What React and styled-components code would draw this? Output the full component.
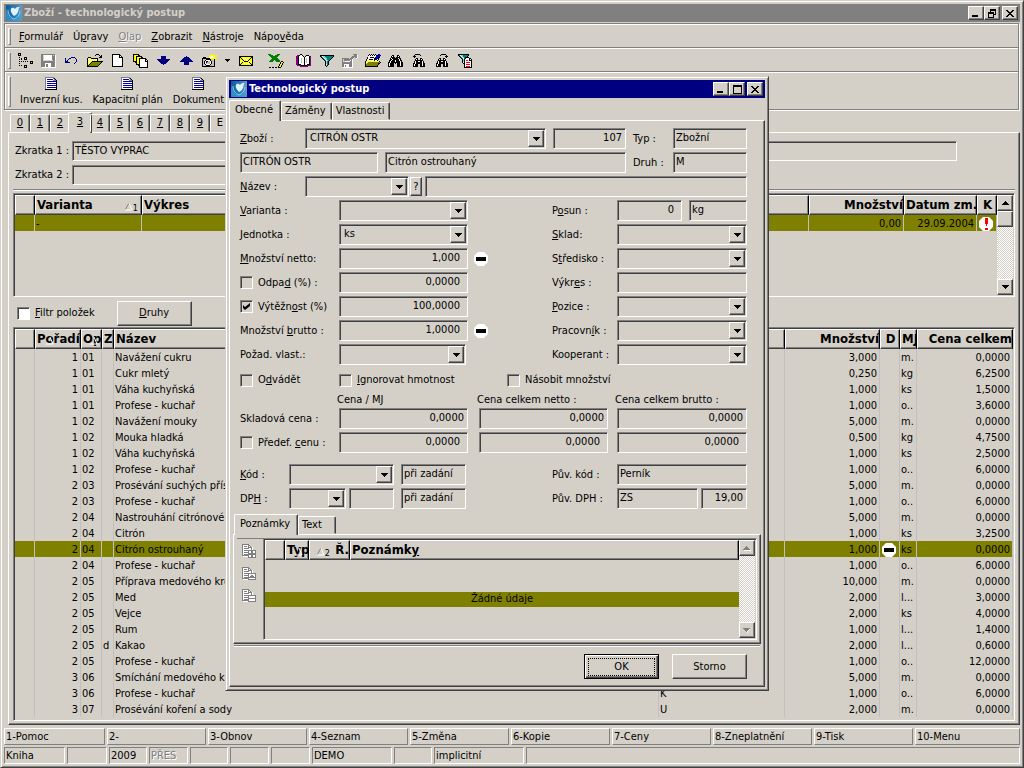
import { Fragment } from "react"
import styled, { createGlobalStyle, css } from "styled-components"

const GlobalStyle = createGlobalStyle`
    *{
        box-sizing:border-box;
    }

    body{
        margin:0;
        background-color:#d4d0c8;
    }

    body, button, input, select, table{
        font-family:"DejaVu Sans Condensed", "DejaVu Sans", sans-serif;
        font-size:11px;
        line-height:14px;
        color:#000;
    }
`

/* ---------- icons ---------- */

const palette = {
    K: "#000000", W: "#ffffff", G: "#808080", Y: "#ffff00", O: "#808000",
    B: "#000080", R: "#ff0000", T: "#008080", C: "#80d0d0", P: "#800080",
    E: "#008000", S: "#c0c0c0", V: "#0000ff",
}

const sprites = {
    tree: [
        "KKK............", "K.K............", "KKK............", "...............",
        ".K....KKK......", "...K..K.K......", ".K.K..KKK......", "...............",
        ".K.K.K.K.K..KKK", "............K.K", ".K..........KKK", "...............",
        ".K.K..KKK......", "......K.K......", "......KKK......",
    ],
    save: [
        "GGGGGGGGGGGGGG.", "GG.WWWWWWWWG.GW", "GG.WWWWWWWWGGGW", "GG.WWWWWWWWGGGW",
        "GG.WWWWWWWWGGGW", "GG.WWWWWWWWGGGW", "GG..........GGW", "GGGGGGGGGGGGGGW",
        "GGGGGGGGGGGGGGW", "GGGGWWWWWWGGGGW", "GGGGWGGWWWGGGGW", "GGGGWGGWWWGGGGW",
        "GGGGWGGWWWGGGGW", ".WWWWWWWWWWWWWW",
    ],
    undo: [
        "......BBBB...", "B...BB....B..", "B..B.......B.", "B.B........B.",
        "BBB........B.", "BBBBB.....B..", ".........B...",
    ],
    open: [
        ".........KKK....", "........K...K.K.", ".............KK.", ".KKK........KKK.",
        "KYWYKKKKKKK.....", "KWYWYWYWYWK.....", "KYWYWYWYWYK.....", "KWYWYKKKKKKKKKKK",
        "KYWYKOOOOOOOOOK.", "KWYKOOOOOOOOOK..", "KYKOOOOOOOOOK...", "KKOOOOOOOOOK....",
        "KKKKKKKKKKK.....",
    ],
    page: [
        "KKKKKKKK...", "KWWWWWWKK..", "KWWWWWWKWK.", "KWWWWWWKKKK", "KWWWWWWWWWK",
        "KWWWWWWWWWK", "KWWWWWWWWWK", "KWWWWWWWWWK", "KWWWWWWWWWK", "KWWWWWWWWWK",
        "KWWWWWWWWWK", "KWWWWWWWWWK", "KKKKKKKKKKK",
    ],
    copies: [
        "KKKKKK.........", "KYYYYKK........", "KYYKKKKKK......", "KYYKYYYYKK.....",
        "KYYKYYKKKKKKK..", "KYYKYYKWWWWWKK.", "KYYKYYKWWWWWKWK", "KKKKYYKWWWWWKKK",
        "..KKYYKWWWWWWWK", "...KYYKWWWWWWWK", "...KKKKWWWWWWWK", ".....KKWWWWWWWK",
        "......KWWWWWWWK", "......KKKKKKKKK",
    ],
    down: [
        "....BBBBB....", "....BBBBB....", "....BBBBB....", "BBBBBBBBBBBBB",
        ".BBBBBBBBBBB.", "..BBBBBBBBB..", "...BBBBBBB...", "....BBBBB....", "......B......",
    ],
    up: [
        "......B......", "....BBBBB....", "...BBBBBBB...", "..BBBBBBBBB..",
        ".BBBBBBBBBBB.", "BBBBBBBBBBBBB", "....BBBBB....", "....BBBBB....", "....BBBBB....",
    ],
    camera: [
        ".........Y..Y..", "........YYYYY.Y", ".......YYWWYYY.", ".KKK...YWWWWY.Y",
        "KKKKKKKKYYYYYY.", "KSSSKKKKKSSYK.Y", "KSSKWWWWKSSSK..", "KSKWKKSSWKSSK..",
        "KSKWKSSSWKSSK..", "KSKWSSSSWKSSK..", "KSSKWWWWKSSSK..", "KSSSKKKKSSSSK..",
        "KKKKKKKKKKKKK..",
    ],
    caret: ["KKKKK", ".KKK.", "..K.."],
    mail: [
        "KKKKKKKKKKKKKK", "KKYYYYYYYYYYKK", "KYKYWYWYWYYKYK", "KYYKYWYWYYKYYK",
        "KYWYKYYYYKWYYK", "KYYWYKKKKYWYYK", "KYWKYYYYYYKWYK", "KYKYYWYWYWYKYK",
        "KKYYYYYYYYYYKK", "KKKKKKKKKKKKKK",
    ],
    excel: [
        "EEE......EEE....", ".EEEE..EEEE.....", "..EEEEEEEE......", "...EEEEEE.......",
        "....EEEEEE......", "...EEEEEEEE.....", "..EEEE.EEEEE....", ".EEEE...EEEE.KK.",
        "............KYYK", "............KYK.", "...........KYYK.", "...........KYK..",
        "..........KYYK..", ".KK.KK.KK.KKK...",
    ],
    book: [
        "....KK.........", ".PPKWWK...KKK..", "PPKWWWWK.KWWWKP", "PPKWWWWWKWWWWKP",
        "PPKWWSWWKWSWWKP", "PPKWWSWWKWSWWKP", "PPKWWSWWKWSWWKP", "PPKWWSWWKWSWWKP",
        "PPKWWSWWKWSWWKP", "PPKWWWWWKWWWWKP", "PPKKKWWWKWWKKKP", ".PPPPKKKKKKPPPP",
        "....PPPPPPPP...",
    ],
    filter: [
        "KKKKKKKKKKKKKK", "KTWCCTTTTTTTTK", ".KTWCCTTTTTTK.", "..KTWCCTTTTK..",
        "...KTWCTTTK...", "....KTWCTK....", ".....KCTK.....", ".....KCTK.....",
        ".....KCTK.....", ".....KWTK.....", ".....KCK......", "......K.......",
    ],
    export: [
        "...........GGGG.", "............GGGW", "..........GGGGGW", ".........GGG.GGW",
        "GGGGGGG.GGG...W.", "G.GGGGGGGGW.....", "G.GGGGGGWGW.....", "G..WWWWWGGW.....",
        "GGGGGGGGGGW.....", "GGGGGGGGGGW.....", "GGWWWWWGGGW.....", "GGWGWWWGGGW.....",
        "GGWGWWWGGGW.....", ".WWWWWWWWWW.....",
    ],
    notes: [
        "....K.K.K.K..BB.", "...KWKWKWKWKBBVB", "...WWWWWWWWBVVB.", "..KWWKKKKWBVVBK.",
        "..KWWWWWWKBVBK..", ".KWWKKKKWKBBWK..", ".KWWWWWWWKWWK...", "KYYYYYYYYYYYYYK.",
        "KWYOOOOOOOOOOOOK", "KYOOOOOOOOOOOKK.", "KOOOOOOOOOOOOK..", "KOOOOOOOOOOOK...",
        "KKKKKKKKKKKKK...",
    ],
    find: [
        "....KK...KK....", "...KWK...KWK...", "...KKKK.KKKK...", "..KWKKKKKKWKK..",
        "..KKWKKKKKKWK..", ".KKWKKKWKKKWKK.", ".KWKKKKWKKKKWK.", "KKWKKKKKKKKKWKK",
        "KWKKKK.K.KKKWKK", "KWKKKK...KKKWKK", "KWKKKK...KKKWKK", "KKKKKK...KKKKKK",
    ],
    findPrev: [
        "..KKKKK.....", ".K.....K....", "KKK.........", ".K..........", "...KK..KK...",
        "..KWK..KWK..", "..KKKKKKKK..", ".KWKKWWKKWK.", ".KWKKKKKKWK.", "KKWKKKKKKWKK",
        "KWKKK..KKWKK", "KWKKK..KKWKK", "KKKKK..KKKKK",
    ],
    findNext: [
        ".....KKKKK..", "....K.....K.", ".........KKK", "..........K.", "...KK..KK...",
        "..KWK..KWK..", "..KKKKKKKK..", ".KWKKWWKKWK.", ".KWKKKKKKWK.", "KKWKKKKKKWKK",
        "KWKKK..KKWKK", "KWKKK..KKWKK", "KKKKK..KKKKK",
    ],
    filterPage: [
        "KKKKKKKKKKK...", "KTWCCTTTTTK...", ".KTWCTTTTK....", "..KTWCTKKKK...",
        "...KTWTKWWWKK.", "....KCKWWWWKWK", "....KCKWRRWKKK", "....KCKWWWWWWK",
        "....KWKWRRRRWK", ".....KKWWWWWWK", "......KWRRRRWK", "......KWWWWWWK",
        "......KWRRRRWK", "......KKKKKKKK",
    ],
    doc: [
        "GGGGGGGGG....", "GWWWWWWWGK...", "GWVBBBBVWGK..", "GWWWWWWWGGGK.",
        "GWVVBBBBBBVK.", "GWWWWWWWWWWK.", "GWBBBBVVBBVK.", "GWWWWWWWWWWK.",
        "GWVBBBBBVBVK.", "GWWWWWWWWWWK.", "GWVVBBBBBBVK.", "GWWWWWWWWWWK.",
        "KKKKKKKKKKKK.",
    ],
    rowAdd: [
        "GGGGGGG.......", "GWWWWWGG......", "GWGGGWGWG.....", "GWWWWWGGGGW...",
        "GWGGGGGWWGW...", "GWWWWWWWWGW...", "GWGGGGGGGGGGGG", "GWWWWWGWWGGWWG",
        "GWGGGGGWWGGWWG", "GWWWWWGGGGGGGG", "GWGGGGGGGGGGGG", "GGGGGGGWWGGWWG",
        ".WWWWWGWWGGWWG", "......GGGGGGGG",
    ],
    rowEdit: [
        "GGGGGGG.......", "GWWWWWGG......", "GWGGGWGWG.....", "GWWWWWGGGGW...",
        "GWGGGGGWWGW...", "GWWWWWWWWGW...", "GWGGGGGGGGGGGG", "GWWWWWGWWWWWWG",
        "GWGGGGGWWGGWWG", "GWWWWWGWGGGGWG", "GWGGGGGGGGGGGG", "GGGGGGGWWWWWWG",
        ".WWWWWGGGGGGGG",
    ],
    rowRemove: [
        "GGGGGGG.......", "GWWWWWGG......", "GWGGGWGWG.....", "GWWWWWGGGGW...",
        "GWGGGGGWWGW...", "GWWWWWWWWGW...", "GWGGGGGGGGGGGG", "GWWWWWGWWWWWWG",
        "GWGGGGGWWWWWWG", "GWWWWWGGGGGGGG", "GWGGGGGWWWWWWG", "GGGGGGGWWWWWWG",
        ".WWWWWGGGGGGGG",
    ],
    minimize: ["........", "........", "........", "........", "........", "........", "KKKKKK..", "KKKKKK.."],
    maximize: [
        "KKKKKKKKK", "KKKKKKKKK", "K.......K", "K.......K", "K.......K",
        "K.......K", "K.......K", "K.......K", "KKKKKKKKK",
    ],
    restore: [
        "..KKKKKK", "..KKKKKK", "..K....K", "KKKKKK.K", "KKKKKK.K", "K....KKK",
        "K....K..", "K....K..", "KKKKKK..",
    ],
    close: ["KK....KK", ".KK..KK.", "..KKKK..", "...KK...", "..KKKK..", ".KK..KK.", "KK....KK"],
    dropDown: ["KKKKKKK", ".KKKKK.", "..KKK..", "...K..."],
    arrowUp: ["...K...", "..KKK..", ".KKKKK.", "KKKKKKK"],
    arrowUpOff: ["...G....", "..GGG...", ".GGGGG..", "GGGGGGG.", ".WWWWWWW"],
    arrowDownOff: ["GGGGGGG.", ".GGGGGW.", "..GGGW..", "...GW...", "....W..."],
}

function Sprite({ name }) {
    const rows = sprites[name]
    const rects = []

    rows.forEach((row, y) => {
        for (const run of row.matchAll(/([A-Z])\1*/g)) {
            rects.push(
                <rect key={`${y}-${run.index}`} x={run.index} y={y} width={run[0].length} height={1} fill={palette[run[1]]} />
            )
        }
    })

    return (
        <Svg width={rows[0].length} height={rows.length} shapeRendering="crispEdges" aria-hidden="true">
            {rects}
        </Svg>
    )
}

function Logo() {
    return (
        <Svg width="16" height="16" viewBox="0 0 16 16" aria-hidden="true">
            <defs>
                <linearGradient id="logoSky" x1="0" y1="0" x2="1" y2="0">
                    <stop offset="0" stopColor="#0b5a9c" />
                    <stop offset="0.6" stopColor="#2a7fb8" />
                    <stop offset="1" stopColor="#6a9fc4" />
                </linearGradient>
            </defs>
            <rect width="16" height="16" fill="url(#logoSky)" />
            <path d="M1 3c0 6 2 10 7 11 4 0 6-3 7-7l1 9H0V8z" fill="#3fa0d4" opacity="0.7" />
            <path d="M2 5c0 5 3 8 6 9 3-1 6-4 6-8" stroke="#8fd0ec" fill="none" />
            <path d="M5 4c1-2 3-1 4 0 1-2 3-2 5-2-2 1-1 3-2 5-1 2-2 3-4 4C6 9 4 6 5 4z" fill="#dff3fb" />
        </Svg>
    )
}

function Minus() {
    return (
        <Svg width="14" height="14" viewBox="0 0 14 14" role="img" aria-label="mínus">
            <path d="M4 0h6l4 4v6l-4 4H4l-4-4V4z" fill="#fff" />
            <path d="M2 5h10v4H2z" fill="#000" />
        </Svg>
    )
}

function Alert() {
    return (
        <Svg width="14" height="14" viewBox="0 0 14 14" role="img" aria-label="pozor">
            <path d="M4 0h6l4 4v6l-4 4H4l-4-4V4z" fill="#fff" />
            <path d="M6 1h3v6H8v2H7V7H6zM6 11h3v2H6z" fill="#f00" />
        </Svg>
    )
}

function Sort({ order, right = 3 }) {
    return (
        <SortMark $right={right}>
            <svg width="8" height="8" viewBox="0 0 8 8" aria-hidden="true">
                {order && <path d="M4 0L0 7" stroke="#808080" fill="none" />}
                <path d="M4 0L7 7H0" stroke="#fff" fill="none" />
            </svg>
            {order}
        </SortMark>
    )
}

/* the letter after & is the access key */
function Caption({ text }) {
    const [before, after] = text.split("&")
    if (after === undefined) return <>{before}</>
    return <>{before}<u>{after[0]}</u>{after.slice(1)}</>
}

/* ---------- controls ---------- */

function Combo({ id, label, value = "", width }) {
    return (
        <ComboBox $width={width}>
            <select id={id} aria-label={label} defaultValue={value}>
                <option>{value}</option>
            </select>
            <ArrowBox><Sprite name="dropDown" /></ArrowBox>
        </ComboBox>
    )
}

function Check({ id, text, checked, white }) {
    return (
        <CheckLabel htmlFor={id}>
            <CheckBox id={id} type="checkbox" defaultChecked={checked} $white={white} />
            <span><Caption text={text} /></span>
        </CheckLabel>
    )
}

function Scroll({ off, thumb }) {
    return (
        <ScrollBar>
            <ScrollButton type="button" aria-label="Nahoru"><Sprite name={off ? "arrowUpOff" : "arrowUp"} /></ScrollButton>
            {thumb && <Thumb />}
            <ScrollButton type="button" aria-label="Dolů" $last><Sprite name={off ? "arrowDownOff" : "dropDown"} /></ScrollButton>
        </ScrollBar>
    )
}

function Caps({ middle, middleLabel }) {
    return (
        <CaptionButtons>
            <CaptionButton type="button" aria-label="Minimalizovat"><Sprite name="minimize" /></CaptionButton>
            <CaptionButton type="button" aria-label={middleLabel}><Sprite name={middle} /></CaptionButton>
            <CaptionButton type="button" aria-label="Zavřít" $apart><Sprite name="close" /></CaptionButton>
        </CaptionButtons>
    )
}

/* ---------- data ---------- */

const menu = ["&Formulář", "Ú&pravy", "&Olap", "&Zobrazit", "&Nástroje", "Nápo&věda"]

const tools = [
    ["tree", "Strom"], ["save", "Uložit"], ["undo", "Zpět"], ["open", "Otevřít"], ["page", "Nový"],
    ["copies", "Kopie"], ["down", "Další"], ["up", "Předchozí"], ["camera", "Snímek"], ["caret", "Více"],
    ["mail", "Pošta"], ["excel", "Excel", 7], ["book", "Kniha", 5], ["filter", "Filtr"], ["export", "Export"],
    ["notes", "Poznámky"], ["find", "Hledat"], ["findPrev", "Hledat předchozí"], ["findNext", "Hledat další"],
    ["filterPage", "Filtr stránky"],
]

const items = [
    ["1", "01", "", "Navážení cukru", "", "3,000", "m.", "0,0000"],
    ["1", "01", "", "Cukr mletý", "", "0,250", "kg", "6,2500"],
    ["1", "01", "", "Váha kuchyňská", "", "1,000", "ks", "1,5000"],
    ["1", "01", "", "Profese - kuchař", "", "1,000", "o..", "3,6000"],
    ["1", "02", "", "Navážení mouky", "", "5,000", "m.", "0,0000"],
    ["1", "02", "", "Mouka hladká", "", "0,500", "kg", "4,7500"],
    ["1", "02", "", "Váha kuchyňská", "", "1,000", "ks", "2,5000"],
    ["1", "02", "", "Profese - kuchař", "", "1,000", "o..", "6,0000"],
    ["2", "03", "", "Prosévání suchých přís", "", "5,000", "m.", "0,0000"],
    ["2", "03", "", "Profese - kuchař", "", "1,000", "o..", "6,0000"],
    ["2", "04", "", "Nastrouhání citrónové", "", "5,000", "m.", "0,0000"],
    ["2", "04", "", "Citrón", "", "1,000", "ks", "3,2500"],
    ["2", "04", "", "Citrón ostrouhaný", "", "1,000", "ks", "0,0000"],
    ["2", "04", "", "Profese - kuchař", "", "1,000", "o..", "6,0000"],
    ["2", "05", "", "Příprava medového kré", "", "10,000", "m.", "0,0000"],
    ["2", "05", "", "Med", "", "2,000", "l...", "3,0000"],
    ["2", "05", "", "Vejce", "", "2,000", "ks", "4,0000"],
    ["2", "05", "", "Rum", "", "1,000", "l...", "1,4000"],
    ["2", "05", "d", "Kakao", "", "2,000", "l...", "0,6000"],
    ["2", "05", "", "Profese - kuchař", "", "1,000", "o..", "12,0000"],
    ["3", "06", "", "Smíchání medového kré", "", "5,000", "m.", "0,0000"],
    ["3", "06", "", "Profese - kuchař", "K", "1,000", "o..", "6,0000"],
    ["3", "07", "", "Prosévání koření a sody", "U", "2,000", "m.", "0,0000"],
]

const selected = 12

const keys = ["1-Pomoc", "2-", "3-Obnov", "4-Seznam", "5-Změna", "6-Kopie", "7-Ceny", "8-Zneplatnění", "9-Tisk", "10-Menu"]

const states = [
    ["Kniha", 61], ["", 40], ["2009", 38], ["PŘES", 39], ["", 38], ["", 39], ["", 39],
    ["DEMO", 80], ["", 38], ["implicitní", 90], ["", 0],
]

/* ---------- page ---------- */

export default function App() {
    return (
        <>
            <GlobalStyle />
            <MainWindow>
                <TitleBar as="header">
                    <Logo />
                    <Title as="h1">Zboží - technologický postup</Title>
                    <Caps middle="restore" middleLabel="Obnovit" />
                </TitleBar>

                <Bars>
                    <Bar as="nav" $height={24}>
                        <Grip />
                        {menu.map((text) => (
                            <MenuItem type="button" key={text} disabled={text === "&Olap"}><Caption text={text} /></MenuItem>
                        ))}
                    </Bar>
                    <Bar $height={24}>
                        <Grip />
                        {tools.map(([icon, label, space]) => (
                            <Tool type="button" key={icon} aria-label={label} $narrow={icon === "caret"} $space={space}>
                                <Sprite name={icon} />
                            </Tool>
                        ))}
                    </Bar>
                    <Bar $height={38}>
                        <Grip />
                        {["Inverzní kus.", "Kapacitní plán", "Dokument"].map((text) => (
                            <Report type="button" key={text}>
                                <Sprite name="doc" />
                                {text}
                            </Report>
                        ))}
                    </Bar>
                </Bars>

                <MainTabs role="tablist">
                    {[..."0123456789E"].map((text) => (
                        <Tab type="button" role="tab" key={text} aria-selected={text === "3"}>
                            {text === "E" ? text : <u>{text}</u>}
                        </Tab>
                    ))}
                </MainTabs>

                <Page>
                    <Shortcut>
                        <label htmlFor="zkratka1">Zkratka 1 :</label>
                        <Field id="zkratka1" defaultValue="TĚSTO VYPRAC" $width={885} />
                    </Shortcut>
                    <Shortcut>
                        <label htmlFor="zkratka2">Zkratka 2 :</label>
                        <Field id="zkratka2" $width={500} />
                    </Shortcut>

                    <VariantPane>
                        <GridBox $height={104}>
                            <Grid>
                                <colgroup>
                                    <Col $width={20} /><Col $width={107} /><col /><Col $width={95} />
                                    <Col $width={73} /><Col $width={20} />
                                </colgroup>
                                <thead>
                                    <tr>
                                        <Th />
                                        <Th>Varianta<Sort order="1" /></Th>
                                        <Th>Výkres</Th>
                                        <Th $right>Množství</Th>
                                        <Th $right>Datum zm.</Th>
                                        <Th $center>K</Th>
                                    </tr>
                                </thead>
                                <tbody>
                                    <Row $selected>
                                        <td /><td>-</td><td />
                                        <Number>0,00</Number>
                                        <Number>29.09.2004</Number>
                                        <Mark><Alert /></Mark>
                                    </Row>
                                </tbody>
                            </Grid>
                            <Scroll thumb />
                        </GridBox>
                    </VariantPane>

                    <FilterRow>
                        <Check id="filtr" text="&Filtr položek" white />
                        <PushButton type="button"><Caption text="&Druhy" /></PushButton>
                    </FilterRow>

                    <GridBox $grow>
                        <Grid>
                            <colgroup>
                                <Col $width={20} /><Col $width={46} /><Col $width={21} /><Col $width={12} />
                                <col /><Col $width={126} /><Col $width={95} /><Col $width={20} />
                                <Col $width={17} /><Col $width={96} />
                            </colgroup>
                            <thead>
                                <tr>
                                    <Th />
                                    <Th>Pořadí<Sort right={26} /></Th>
                                    <Th>Op<Sort /></Th>
                                    <Th>Z</Th>
                                    <Th>Název</Th>
                                    <Th />
                                    <Th $right>Množství</Th>
                                    <Th $center>D</Th>
                                    <Th>MJ</Th>
                                    <Th $right>Cena celkem</Th>
                                </tr>
                            </thead>
                            <tbody>
                                {items.map(([order, op, z, name, kind, amount, unit, price], i) => (
                                    <Row key={i} $selected={i === selected}>
                                        <td />
                                        <Number>{order}</Number>
                                        <td>{op}</td>
                                        <td>{z}</td>
                                        <td>{name}</td>
                                        <td>{kind}</td>
                                        <Number>{amount}</Number>
                                        <Mark>{i === selected && <Minus />}</Mark>
                                        <td>{unit}</td>
                                        <Number>{price}</Number>
                                    </Row>
                                ))}
                            </tbody>
                        </Grid>
                    </GridBox>
                </Page>

                <Keys>
                    {keys.map((text) => <Key type="button" key={text}>{text}</Key>)}
                </Keys>
                <States>
                    {states.map(([text, width], i) => (
                        <State key={i} $width={width} $off={text === "PŘES"}>{text}</State>
                    ))}
                </States>

                <ItemDialog />
            </MainWindow>
        </>
    )
}

const pairs = [
    [["&Jednotka :", "combo", "ks"], ["&Sklad:", "combo", ""]],
    [["&Množství netto:", "minus", "1,000"], ["S&tředisko :", "combo", ""]],
    [["Odpa&d (%) :", "check", "0,0000"], ["Výkr&es :", "text", ""]],
    [["Výtěžn&ost (%)", "checked", "100,0000"], ["&Pozice :", "combo", ""]],
    [["Množství &brutto :", "minus", "1,0000"], ["Pracovn&ík :", "combo", ""]],
    [["Požad. vlast.:", "combo", "", 127], ["Kooperant :", "combo", ""]],
]

function ItemDialog() {
    return (
        <Dialog role="dialog" aria-labelledby="dialogTitle">
            <TitleBar $active>
                <Logo />
                <Title id="dialogTitle">Technologický postup</Title>
                <Caps middle="maximize" middleLabel="Maximalizovat" />
            </TitleBar>
            <DialogTabs role="tablist">
                {["Obecné", "Záměny", "Vlastnosti"].map((text) => (
                    <WideTab type="button" role="tab" key={text} aria-selected={text === "Obecné"}>{text}</WideTab>
                ))}
            </DialogTabs>

            <DialogPage>
                <Form>
                    <Line>
                        <Label htmlFor="zbozi" $width={65}><Caption text="&Zboží :" /></Label>
                        <Combo id="zbozi" value="CITRÓN OSTR" width={241} />
                        <Gap $width={7} />
                        <Field aria-label="Číslo" defaultValue="107" $width={73} $right $tight />
                        <Gap $width={7} />
                        <Label htmlFor="typ" $width={40}>Typ :</Label>
                        <Field id="typ" defaultValue="Zbožní" $width={74} />
                    </Line>
                    <Line>
                        <Field aria-label="Zkratka" defaultValue="CITRÓN OSTR" $width={138} />
                        <Gap $width={7} />
                        <Field aria-label="Jméno" defaultValue="Citrón ostrouhaný" $width={241} />
                        <Gap $width={7} />
                        <Label htmlFor="druh" $width={40}>Druh :</Label>
                        <Field id="druh" defaultValue="M" $width={74} />
                    </Line>
                    <Line>
                        <Label htmlFor="nazev" $width={65}><Caption text="&Název :" /></Label>
                        <Combo id="nazev" width={104} />
                        <HelpButton type="button">?</HelpButton>
                        <Gap $width={3} />
                        <Field aria-label="Popis názvu" $width={322} />
                    </Line>
                    <PairLine>
                        <label htmlFor="varianta"><Caption text="&Varianta :" /></label>
                        <Combo id="varianta" />
                        <span />
                        <label htmlFor="posun"><Caption text="P&osun :" /></label>
                        <Split>
                            <Field id="posun" defaultValue="0" $width={65} $right />
                            <Field aria-label="Jednotka posunu" defaultValue="kg" $width={58} />
                        </Split>
                    </PairLine>
                    {pairs.map(([[text, kind, value, width], right]) => (
                        <PairLine key={text}>
                            {kind.startsWith("check")
                                ? <Check id={text} text={text} checked={kind === "checked"} />
                                : <label htmlFor={text}><Caption text={text} /></label>}
                            {kind === "combo"
                                ? <Combo id={text} value={value} width={width} />
                                : <Field id={kind === "minus" ? text : undefined} aria-label={text.replace("&", "")} defaultValue={value} $right />}
                            <Sign>{kind === "minus" && <Minus />}</Sign>
                            <label htmlFor={right[0]}><Caption text={right[0]} /></label>
                            {right[1] === "combo" ? <Combo id={right[0]} /> : <Field id={right[0]} />}
                        </PairLine>
                    ))}

                    <CheckLine>
                        <Check id="odvadet" text="O&dvádět" />
                        <Check id="ignorovat" text="&Ignorovat hmotnost" />
                        <Check id="nasobit" text="Násobit množství" />
                    </CheckLine>

                    <Prices>
                        <span />
                        <Heading>Cena / MJ</Heading>
                        <Heading>Cena celkem netto :</Heading>
                        <Heading>Cena celkem brutto :</Heading>
                        <label htmlFor="cenaMj">Skladová cena :</label>
                        <Field id="cenaMj" defaultValue="0,0000" $width={129} $right $tight />
                        <Field aria-label="Skladová cena netto" defaultValue="0,0000" $width={129} $right $tight />
                        <Field aria-label="Skladová cena brutto" defaultValue="0,0000" $width={130} $right $tight />
                        <Check id="predef" text="Předef. &cenu :" />
                        <Field aria-label="Cena" defaultValue="0,0000" $width={129} $right />
                        <Field aria-label="Cena netto" defaultValue="0,0000" $width={129} $right />
                        <Field aria-label="Cena brutto" defaultValue="0,0000" $width={130} $right />
                    </Prices>

                    {[["kod", "&Kód :"], ["dph", "DP&H :"]].map(([id, text]) => (
                        <Line key={id}>
                            <Label htmlFor={id} $width={49}><Caption text={text} /></Label>
                            {id === "kod" ? <Combo id={id} width={105} /> : (
                                <Fragment>
                                    <Combo id={id} width={57} />
                                    <Gap $width={3} />
                                    <Field aria-label="Sazba" $width={45} />
                                </Fragment>
                            )}
                            <Gap $width={7} />
                            <Field aria-label="Kdy" defaultValue="při zadání" $width={65} />
                            <Gap $width={86} />
                            <Label htmlFor={`puv-${id}`} $width={65}>{id === "kod" ? "Pův. kód :" : "Pův. DPH :"}</Label>
                            {id === "kod" ? <Field id="puv-kod" defaultValue="Perník" $width={130} /> : (
                                <Fragment>
                                    <Field id="puv-dph" defaultValue="ZS" $width={81} />
                                    <Gap $width={3} />
                                    <Field aria-label="Původní sazba" defaultValue="19,00" $width={46} $right $tight />
                                </Fragment>
                            )}
                        </Line>
                    ))}
                </Form>

                <NoteTabs role="tablist">
                    <WideTab type="button" role="tab" aria-selected="true">Poznámky</WideTab>
                    <WideTab type="button" role="tab" aria-selected="false" $roomy>Text</WideTab>
                </NoteTabs>
                <Notes>
                    <NoteTools>
                        <NoteTool type="button" aria-label="Přidat"><Sprite name="rowAdd" /></NoteTool>
                        <NoteTool type="button" aria-label="Upravit"><Sprite name="rowEdit" /></NoteTool>
                        <NoteTool type="button" aria-label="Smazat"><Sprite name="rowRemove" /></NoteTool>
                    </NoteTools>
                    <GridBox $height={102} $grow>
                        <NoteList>
                            <Grid>
                                <colgroup><Col $width={20} /><Col $width={24} /><Col $width={41} /><col /></colgroup>
                                <thead>
                                    <tr>
                                        <Th />
                                        <Th>Typ<Sort right={5} /></Th>
                                        <Th $right>Ř.<Sort order="2" right={19} /></Th>
                                        <Th>Poznámk<u>y</u></Th>
                                    </tr>
                                </thead>
                            </Grid>
                            <Empty>Žádné údaje</Empty>
                        </NoteList>
                        <Scroll off />
                    </GridBox>
                </Notes>

                <Footer>
                    <PushButton type="button" $main><span>OK</span></PushButton>
                    <PushButton type="button">Storno</PushButton>
                </Footer>
            </DialogPage>
        </Dialog>
    )
}

/* ---------- styles ---------- */

const raised = css`
    border:1px solid;
    border-color:#fff #404040 #404040 #fff;
    box-shadow:inset -1px -1px 0 #808080;
    background-color:#d4d0c8;
`

const sunken = css`
    border:1px solid;
    border-color:#808080 #fff #fff #808080;
    box-shadow:inset 1px 1px 0 #404040;
    background-color:#d4d0c8;
`

const frame = css`
    border:1px solid;
    border-color:#d4d0c8 #404040 #404040 #d4d0c8;
    box-shadow:inset 1px 1px 0 #fff, inset -1px -1px 0 #808080;
    background-color:#d4d0c8;
    padding:3px;
`

const Svg = styled.svg`
    display:block;
    flex:none;
`

const MainWindow = styled.div`
    ${frame}
    position:relative;
    min-height:100vh;
    display:flex;
    flex-direction:column;
`

const Dialog = styled.section`
    ${frame}
    position:absolute;
    left:224px;
    top:75px;
    width:544px;
`

const TitleBar = styled.div`
    display:flex;
    align-items:center;
    height:18px;
    padding:0 2px;
    color:${({ $active }) => $active ? "#fff" : "#d4d0c8"};
    background-color:${({ $active }) => $active ? "#000080" : "#808080"};
`

const Title = styled.h2`
    margin:0 0 0 2px;
    flex:1;
    font-size:11px;
    font-weight:bold;
`

const CaptionButtons = styled.div`
    display:flex;
`

const CaptionButton = styled.button`
    ${raised}
    width:16px;
    height:14px;
    padding:0;
    display:flex;
    align-items:center;
    justify-content:center;
    margin-left:${({ $apart }) => $apart ? "2px" : "0"};
`

const Bars = styled.div`
    margin:1px 1px 1px 0;
    border:1px solid #808080;
    border-top:0;
    box-shadow:1px 1px 0 #fff, inset 1px 0 0 #fff;
`

const Bar = styled.div`
    display:flex;
    align-items:center;
    height:${({ $height }) => $height}px;
    padding:4px 3px 2px;
    border-top:1px solid #808080;
    box-shadow:inset 0 1px 0 #fff;
`

const Grip = styled.span`
    align-self:stretch;
    width:3px;
    margin-right:3px;
    border:1px solid;
    border-color:#fff #808080 #808080 #fff;
`

const flat = css`
    border:0;
    padding:0;
    background:none;
`

const MenuItem = styled.button`
    ${flat}
    margin:0 5px;

    &:disabled{
        color:#808080;
        text-shadow:1px 1px 0 #fff;
    }
`

const Tool = styled.button`
    ${flat}
    width:${({ $narrow }) => $narrow ? 13 : 23}px;
    height:20px;
    margin-left:${({ $space }) => $space || 0}px;
    display:flex;
    align-items:center;
    justify-content:center;
`

const Report = styled.button`
    ${flat}
    margin:0 4px 0 6px;
    display:flex;
    flex-direction:column;
    align-items:center;
    gap:3px;
`

const tabRow = css`
    display:flex;
    align-items:flex-end;
    position:relative;
`

const MainTabs = styled.div`
    ${tabRow}
    height:21px;
    padding-left:6px;
`

const DialogTabs = styled.div`
    ${tabRow}
    height:22px;
    padding-left:2px;
`

const NoteTabs = styled.div`
    ${tabRow}
    height:25px;
    padding-left:3px;
`

const Tab = styled.button`
    height:18px;
    min-width:20px;
    padding:0;
    border:1px solid;
    border-color:#fff #404040 transparent #fff;
    border-radius:2px 2px 0 0;
    box-shadow:inset -1px 0 0 #808080;
    background:none;

    &[aria-selected="true"]{
        height:21px;
        min-width:24px;
        margin:0 -2px -1px;
        padding-bottom:3px;
        border-bottom:0;
        background-color:#d4d0c8;
    }
`

const WideTab = styled(Tab)`
    padding:0 ${({ $roomy }) => $roomy ? 13 : 5}px 0 3px;

    &[aria-selected="true"]{
        margin-right:0;
        padding:0 7px 3px 5px;
    }
`

const Page = styled.main`
    ${raised}
    flex:1;
    margin-left:4px;
    padding:8px 4px 3px 4px;
    display:flex;
    flex-direction:column;
`

const Shortcut = styled.div`
    display:flex;
    align-items:center;
    margin-bottom:4px;
    padding-left:2px;

    label{
        width:57px;
        white-space:nowrap;
    }
`

const Field = styled.input`
    ${sunken}
    border-radius:0;
    width:${({ $width }) => $width ? `${$width}px` : "100%"};
    min-width:0;
    height:20px;
    margin:0;
    padding:0 ${({ $right, $tight }) => $right && !$tight ? 7 : 3}px 2px 2px;
    text-align:${({ $right }) => $right ? "right" : "left"};
    outline:none;

    form &{
        flex:none;
        height:21px;
    }
`

const VariantPane = styled.div`
    padding-top:3px;
    border-top:1px solid #808080;
    box-shadow:inset 0 1px 0 #fff;
`

const GridBox = styled.div`
    ${sunken}
    display:flex;
    align-items:stretch;
    padding:1px;
    ${({ $height }) => $height && `height:${$height}px;`}
    ${({ $grow }) => $grow && "flex:1;"}
    min-width:0;
`

const Grid = styled.table`
    flex:1;
    align-self:flex-start;
    width:100%;
    min-width:0;
    table-layout:fixed;
    border-collapse:separate;
    border-spacing:0;
`

const Col = styled.col`
    width:${({ $width }) => $width}px;
`

const Th = styled.th`
    position:relative;
    height:20px;
    padding:0 0 0 1px;
    border:1px solid;
    border-color:#fff #000 #404040 #fff;
    box-shadow:inset -1px -1px 0 #808080;
    font-size:13px;
    line-height:16px;
    text-align:${({ $right, $center }) => $right ? "right" : $center ? "center" : "left"};
    white-space:nowrap;
    overflow:hidden;
`

const SortMark = styled.small`
    position:absolute;
    right:${({ $right }) => $right}px;
    bottom:1px;
    font-size:9px;
    line-height:10px;
    font-weight:normal;
`

const Row = styled.tr`
    background-color:${({ $selected }) => $selected ? "#808000" : "transparent"};

    td{
        height:16px;
        padding:1px 2px 0 1px;
        border-right:1px solid #c0c0c0;
        white-space:nowrap;
        overflow:hidden;
    }
`

const Number = styled.td`
    text-align:right;
`

const Mark = styled.td`
    svg{
        margin:0 auto;
    }
`

const ScrollBar = styled.div`
    width:16px;
    flex:none;
    display:flex;
    flex-direction:column;
    background:repeating-conic-gradient(#fff 0 25%, #d4d0c8 0 50%) 0 0 / 2px 2px;
`

const ScrollButton = styled.button`
    ${raised}
    width:16px;
    height:16px;
    padding:0;
    display:flex;
    align-items:center;
    justify-content:center;
    margin-top:${({ $last }) => $last ? "auto" : "0"};
`

const Thumb = styled.span`
    ${raised}
    height:16px;
`

const FilterRow = styled.div`
    display:flex;
    align-items:center;
    gap:22px;
    height:30px;
    padding:2px 4px 0;
`

const CheckLabel = styled.label`
    display:flex;
    align-items:center;
    gap:5px;
    white-space:nowrap;
`

const CheckBox = styled.input`
    ${sunken}
    appearance:none;
    flex:none;
    width:13px;
    height:13px;
    margin:0;
    background-color:${({ $white }) => $white ? "#fff" : "#d4d0c8"};

    &:checked::before{
        content:"";
        display:block;
        width:7px;
        height:7px;
        margin:2px;
        background-color:#000;
        clip-path:polygon(0 2px, 2px 4px, 7px 0, 7px 3px, 2px 7px, 0 5px);
    }
`

const PushButton = styled.button`
    ${raised}
    width:75px;
    height:25px;
    padding:0;

    ${({ $main }) => $main && css`
        padding:2px;
        border-color:#000;
        box-shadow:inset 1px 1px 0 #fff, inset -1px -1px 0 #404040, inset -2px -2px 0 #808080;

        span{
            display:block;
            margin:0 1px;
            padding:1px;
            border:1px dotted #000;
        }
    `}
`

const Keys = styled.div`
    display:grid;
    grid-template-columns:101fr repeat(8, 99fr) 105fr;
    gap:2px;
    margin-top:3px;
`

const Key = styled.button`
    min-width:0;
    height:17px;
    padding:0 1px;
    border:1px solid;
    border-color:#fff #808080 #808080 #fff;
    background:none;
    text-align:left;
    white-space:nowrap;
`

const States = styled.footer`
    display:flex;
    gap:2px;
    margin-top:2px;
`

const State = styled.span`
    ${({ $width }) => $width ? `width:${$width}px;` : "flex:1;"}
    height:17px;
    padding:0 1px;
    border:1px solid;
    border-color:#808080 #fff #fff #808080;
    line-height:15px;
    white-space:nowrap;
    ${({ $off }) => $off && "color:#808080; text-shadow:1px 1px 0 #fff;"}
`

const DialogPage = styled.div`
    ${raised}
    padding:7px 3px 7px;
`

const Form = styled.form`
    display:flex;
    flex-direction:column;
    gap:3px;
    padding:0 14px 0 7px;
`

const Line = styled.div`
    display:flex;
    align-items:center;
`

const Label = styled.label`
    width:${({ $width }) => $width}px;
    flex:none;
    white-space:nowrap;
`

const Gap = styled.span`
    width:${({ $width }) => $width}px;
    flex:none;
`

const ComboBox = styled.span`
    position:relative;
    display:block;
    flex:none;
    width:${({ $width }) => $width ? `${$width}px` : "100%"};

    select{
        ${sunken}
        appearance:none;
        display:block;
        width:100%;
        height:21px;
        margin:0;
        padding:0 18px 2px 4px;
        border-radius:0;
        outline:none;
    }
`

const ArrowBox = styled.span`
    ${raised}
    position:absolute;
    top:2px;
    right:2px;
    width:16px;
    height:17px;
    display:flex;
    align-items:center;
    justify-content:center;
    pointer-events:none;
`

const HelpButton = styled.button`
    ${raised}
    width:12px;
    height:19px;
    margin-left:1px;
    padding:0;
`

const PairLine = styled.div`
    display:grid;
    grid-template-columns:99px 129px 84px 65px 130px;
    align-items:center;
    white-space:nowrap;
`

const Split = styled.span`
    display:flex;
    gap:7px;
`

const Sign = styled.span`
    padding-left:6px;
`

const CheckLine = styled.div`
    display:grid;
    grid-template-columns:99px 168px 1fr;
    align-items:center;
    height:23px;
    padding-top:1px;
`

const Prices = styled.div`
    display:grid;
    grid-template-columns:99px 140px 138px 130px;
    grid-template-rows:11px 21px 21px;
    row-gap:3px;
    align-items:center;
    margin-bottom:8px;
    white-space:nowrap;
`

const Heading = styled.span`
    text-indent:-2px;
`

const Notes = styled.div`
    ${raised}
    display:flex;
    padding:3px;
`

const NoteTools = styled.div`
    width:26px;
    display:flex;
    flex-direction:column;
    gap:8px;
    padding:5px 0 0 5px;
    border-top:1px solid #808080;
`

const NoteTool = styled.button`
    ${flat}
    width:14px;
    height:14px;
`

const NoteList = styled.div`
    flex:1;
    min-width:0;
`

const Empty = styled.p`
    margin:32px 0 0;
    height:15px;
    background-color:#808000;
    text-align:center;
`

const Footer = styled.div`
    display:flex;
    justify-content:flex-end;
    gap:13px;
    margin:1px 1px 0;
    padding:8px 13px 0 0;
    border-top:1px solid #808080;
    box-shadow:inset 0 1px 0 #fff;
`
